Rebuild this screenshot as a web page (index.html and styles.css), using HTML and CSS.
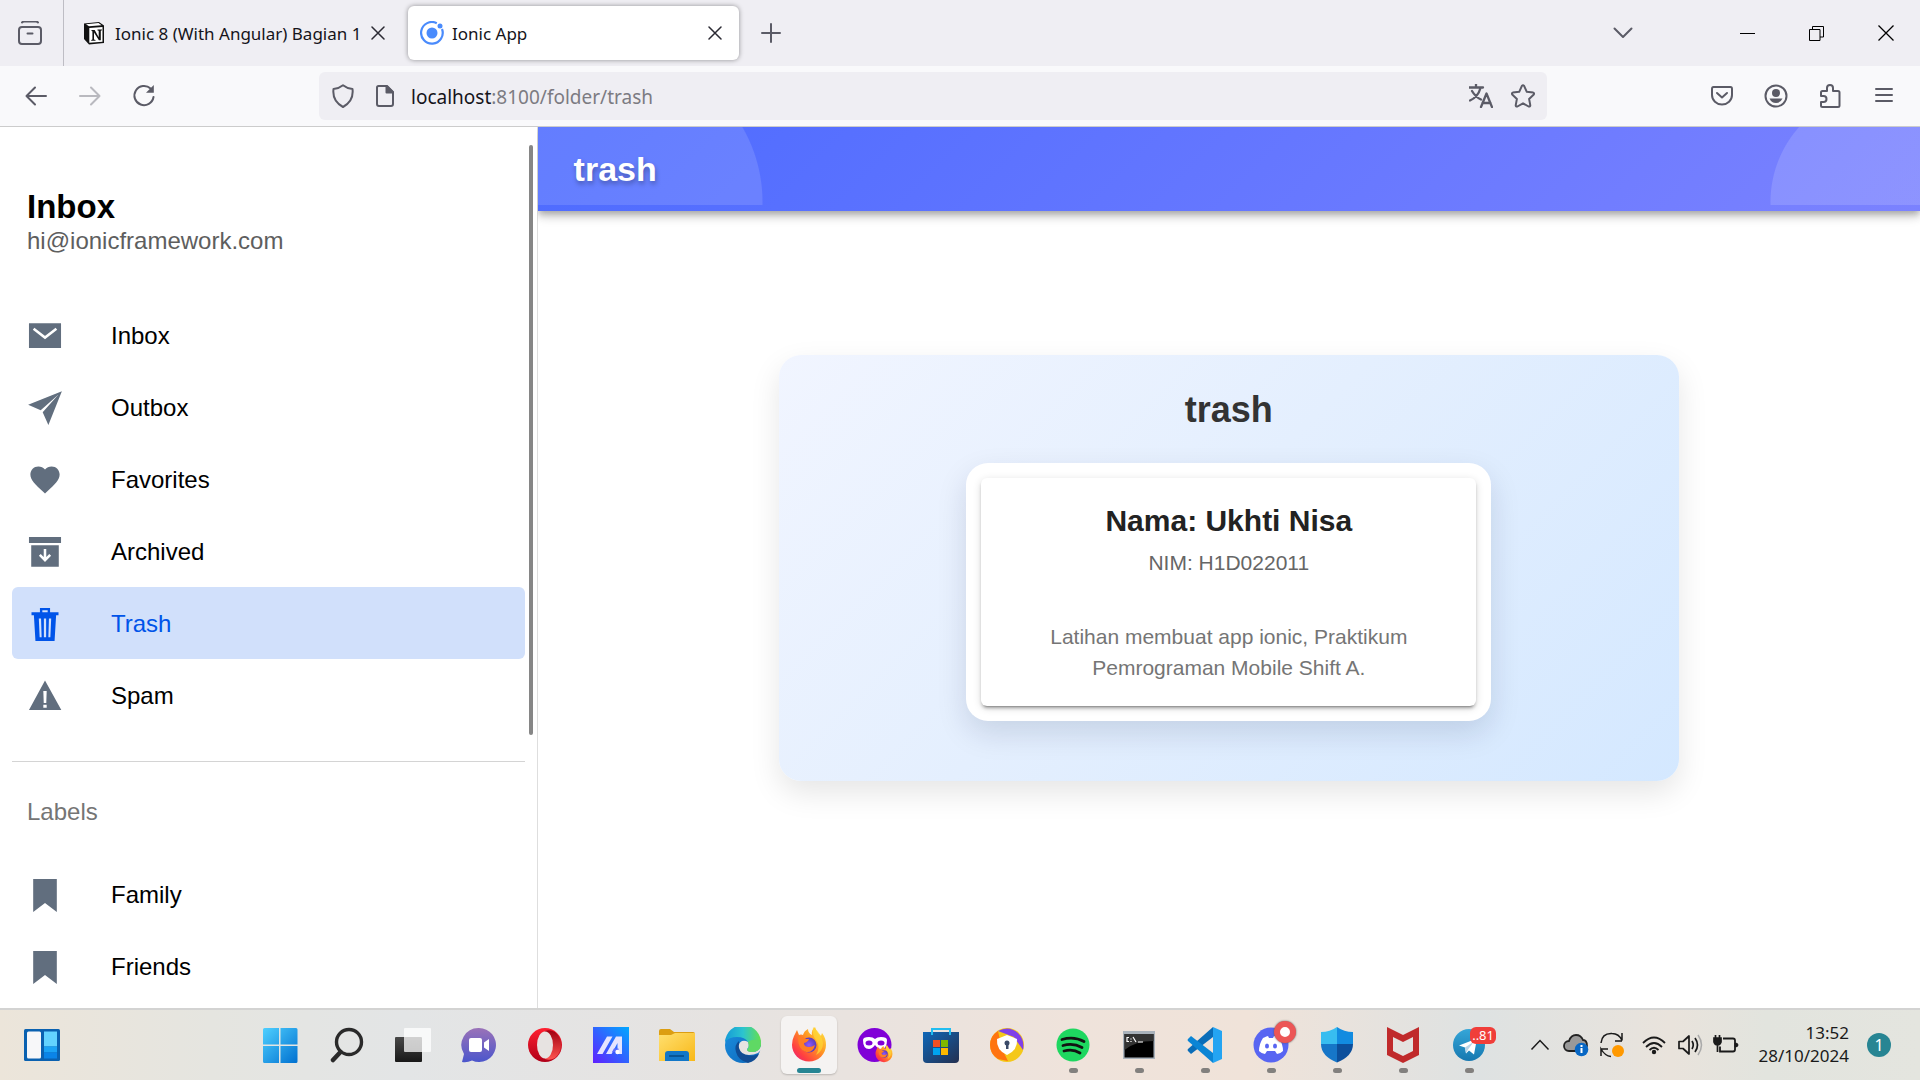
FILE: index.html
```html
<!DOCTYPE html>
<html lang="id">
<head>
<meta charset="utf-8">
<meta name="viewport" content="width=device-width, initial-scale=1">
<title>Ionic App</title>
<link rel="stylesheet" href="styles.css">
</head>
<body>
<header class="browser">
  <div class="tab-strip">
    <button class="recent" aria-label="Recent browsing">
      <svg class="line" width="24" height="24" viewBox="0 0 24 24"><path d="M4 1.500q.5-.9 2-.9h12q1.500 0 2 .9"/><rect x="1" y="6" width="22" height="17" rx="3"/><path d="M9.500 12.500h5"/></svg>
    </button>
    <div class="tab">
      <button class="tab-main">
        <svg width="24" height="24" viewBox="0 0 24 24"><path d="M1 2.500 16 1l5 3.500V22L6 23.500 1 18z" fill="#111"/><path d="M3 3.200 15.500 2l3 2.200L6 5.300z" fill="#fff"/><path d="M6.300 7 19.500 6v14.700L6.300 21.800z" fill="#fff"/><path d="M8.500 9h3.200l4 7.200V9.800l-1.200-.4V8.500H19v.8l-1.200.5v9.400h-1.900L11 11.500v7l1.500.5v.8H8.200V19l1.200-.5v-8.300L8.500 10z" fill="#111"/></svg>
        <span>Ionic 8 (With Angular) Bagian 1</span>
      </button>
      <button class="tab-close" aria-label="Close tab"><svg class="line dark" width="14" height="14" viewBox="0 0 14 14"><path d="m1 1 12 12M13 1 1 13"/></svg></button>
    </div>
    <div class="tab active">
      <button class="tab-main">
        <svg width="24" height="24" viewBox="0 0 24 24"><circle cx="12" cy="12" r="5.500" fill="#4a8bfc"/><circle cx="20" cy="5" r="2.500" fill="#4a8bfc"/><path d="M16.800 2.200A10.800 10.800 0 1 0 22 8" fill="none" stroke="#4a8bfc" stroke-width="2.200"/></svg>
        <span>Ionic App</span>
      </button>
      <button class="tab-close" aria-label="Close tab"><svg class="line dark" width="14" height="14" viewBox="0 0 14 14"><path d="m1 1 12 12M13 1 1 13"/></svg></button>
    </div>
    <button class="tool new-tab" aria-label="New tab"><svg class="line" width="20" height="20" viewBox="0 0 20 20"><path d="M10 1v18M1 10h18"/></svg></button>
    <div class="window-controls">
      <button class="tool all-tabs" aria-label="List all tabs"><svg class="line" width="20" height="12" viewBox="0 0 20 12"><path d="m1.500 1.500 8.500 8.500 8.500-8.500"/></svg></button>
      <button class="win" aria-label="Minimize"><svg width="15" height="15" viewBox="0 0 15 15"><path d="M0 7h15v1H0z"/></svg></button>
      <button class="win" aria-label="Restore"><svg width="15" height="15" viewBox="0 0 15 15"><path d="M.5 3.500h10.500v11H.5zM3.500 3.500v-3h11v10.500h-3.500" fill="none" stroke="#000"/></svg></button>
      <button class="win" aria-label="Close"><svg width="16" height="16" viewBox="0 0 16 16"><path d="m.5.5 15 15m0-15-15 15" stroke="#000" stroke-width="1.300"/></svg></button>
    </div>
  </div>
  <div class="toolbar">
    <button class="tool" aria-label="Back"><svg class="line" width="24" height="24" viewBox="0 0 24 24"><path d="M22 12H2.500M11 3.500 2.500 12l8.500 8.500"/></svg></button>
    <button class="tool dim" aria-label="Forward"><svg class="line" width="24" height="24" viewBox="0 0 24 24"><path d="M2 12h19.500M13 3.500l8.500 8.500-8.500 8.500"/></svg></button>
    <button class="tool" aria-label="Reload"><svg class="line" width="24" height="24" viewBox="0 0 24 24"><path d="M18.600 4.500A9.600 9.600 0 1 0 21.500 13"/><path d="M21.800 1v7.800H14z" fill="#5b5b66" stroke="none"/></svg></button>
    <form class="url-bar">
      <button type="button" aria-label="Tracking protection"><svg class="line" width="24" height="24" viewBox="0 0 24 24"><path d="M12 1.200q4.500 3.500 9.500 3.800Q23 17 12 23 1 17 2.500 5 7.500 4.700 12 1.200z"/></svg></button>
      <button type="button" aria-label="Site information"><svg class="line" width="24" height="24" viewBox="0 0 24 24"><path d="M5.500 2H14l6 6v12q0 2-2 2H6q-2 0-2-2V3.500Q4 2 5.500 2z"/><path d="M13.500 2v6.500H20z" fill="#5b5b66"/></svg></button>
      <label for="address">localhost</label><input id="address" type="text" value=":8100/folder/trash" spellcheck="false">
      <button type="button" aria-label="Translate"><svg class="line" width="24" height="24" viewBox="0 0 24 24"><path d="M0 3.500h14M7 0v3.500M11.500 4Q9 13 1 16.500M3 7q3.500 6 9 8.500M12 23l5.500-13.500L23 23M13.500 19h8" stroke-width="2.300"/></svg></button>
      <button type="button" aria-label="Bookmark this page"><svg class="line" width="24" height="24" viewBox="0 0 24 24"><path d="M10.900 1.800q1.100-1.300 2.200 0l2.700 6 6.400.8q1.500.5.600 1.900l-4.700 4.400 1.200 6.500q-.1 1.500-1.700 1.100L12 19.300l-5.600 3.200q-1.600.4-1.700-1.100l1.200-6.500-4.700-4.400q-.9-1.400.6-1.900l6.400-.8z"/></svg></button>
    </form>
    <button class="tool" aria-label="Save to Pocket"><svg class="line" width="24" height="24" viewBox="0 0 24 24"><path d="M3.500 3h17Q22 3 22 5v6a10 9.500 0 0 1-20 0V5q0-2 1.500-2z"/><path d="m7 9 5 4.500L17 9"/></svg></button>
    <button class="tool" aria-label="Account"><svg class="line" width="24" height="24" viewBox="0 0 24 24"><circle cx="12" cy="12" r="10.500"/><circle cx="12" cy="9" r="4" fill="#5b5b66" stroke="none"/><path d="M5.500 14.500h13q-2 4.500-6.500 4.500t-6.500-4.500z" fill="#5b5b66" stroke="none"/></svg></button>
    <button class="tool" aria-label="Extensions"><svg class="line" width="24" height="24" viewBox="0 0 24 24"><path d="M3 12V8.500Q3 7 4.500 7H9V4a3 3 0 0 1 6 0v3h5q1.500 0 1.500 1.500v13q0 1.500-1.500 1.500H4.500Q3 23 3 21.500V18h2.500a3 3 0 0 0 0-6z"/></svg></button>
    <button class="tool" aria-label="Menu"><svg class="line" width="20" height="24" viewBox="0 0 20 24"><path d="M2 5h16M2 11h16M2 17h16"/></svg></button>
  </div>
</header>

<div class="app">
  <aside class="menu">
    <div class="scroll-thumb"></div>
    <h1>Inbox</h1>
    <p class="note">hi@ionicframework.com</p>
    <nav class="menu-list">
      <a href="#inbox"><svg viewBox="0 0 512 512"><path d="M28 76h456v352H28z"/><path class="cut" d="m94 152 162 126 162-126"/></svg>Inbox</a>
      <a href="#outbox"><svg viewBox="0 0 512 512"><path d="m16 208 179 80L448 64 223 317l81 179L496 16z"/></svg>Outbox</a>
      <a href="#favorites"><svg viewBox="0 0 512 512"><path d="m256 448-30-27C119 322 48 259 48 179 48 114 98 64 162 64c37 0 71 17 94 44 23-27 57-44 94-44 64 0 114 50 114 115 0 80-71 143-178 242z"/></svg>Favorites</a>
      <a href="#archived"><svg viewBox="0 0 512 512"><path d="M28 44h456v84H28zM60 160h392v304H60z"/><path class="cut" d="M256 212v150M182 298l74 74 74-74"/></svg>Archived</a>
      <a href="#trash" class="selected"><svg viewBox="0 0 512 512"><path fill-rule="evenodd" d="M64 88h120V28h144v60h120v42h-34l-22 366H120L98 130H64zm154 0h76V62h-76zM168 176l12 270h28l-8-270zm72 0v270h32V176zm72 0-8 270h28l12-270z"/></svg>Trash</a>
      <a href="#spam"><svg viewBox="0 0 512 512"><path fill-rule="evenodd" d="M256 36 488 456H28zm-24 148 6 170h36l6-170zm0 198v42h48v-42z"/></svg>Spam</a>
    </nav>
    <h2>Labels</h2>
    <nav class="menu-list">
      <a href="#family"><svg viewBox="0 0 512 512"><path d="M88 28h336v468L256 368 88 496z"/></svg>Family</a>
      <a href="#friends"><svg viewBox="0 0 512 512"><path d="M88 28h336v468L256 368 88 496z"/></svg>Friends</a>
    </nav>
  </aside>
  <main>
    <header class="page-header"><div class="page-bar"><h2>trash</h2></div></header>
    <div class="page-content">
      <section class="panel">
        <h2>trash</h2>
        <div class="frame">
          <article class="card">
            <h3>Nama: Ukhti Nisa</h3>
            <p class="nim">NIM: H1D022011</p>
            <p class="about">Latihan membuat app ionic, Praktikum Pemrograman Mobile Shift A.</p>
          </article>
        </div>
      </section>
    </div>
  </main>
</div>

<footer class="taskbar">
  <svg width="0" height="0" class="defs"><defs>
    <linearGradient id="win" x1="0" y1="0" x2="1" y2="1"><stop stop-color="#4fd0ff"/><stop offset="1" stop-color="#0070d0"/></linearGradient>
    <linearGradient id="chat" x1="0" y1="0" x2="0" y2="1"><stop stop-color="#9a72b8"/><stop offset="1" stop-color="#4b56cc"/></linearGradient>
    <linearGradient id="opera" x1="0" y1="0" x2="0" y2="1"><stop stop-color="#ff2030"/><stop offset="1" stop-color="#b00018"/></linearGradient>
    <linearGradient id="operaIn" x1="0" y1="0" x2="0" y2="1"><stop stop-color="#a00010"/><stop offset="1" stop-color="#ff5550"/></linearGradient>
    <linearGradient id="asus" x1="0" y1="1" x2="1" y2="0"><stop stop-color="#6020ff"/><stop offset="1" stop-color="#00a8ff"/></linearGradient>
    <linearGradient id="folder" x1="0" y1="0" x2="1" y2="1"><stop stop-color="#ffe070"/><stop offset="1" stop-color="#f8b818"/></linearGradient>
    <linearGradient id="edgeTop" x1="0" y1="0" x2="1" y2="0"><stop stop-color="#159bd8"/><stop offset=".5" stop-color="#2cc4cf"/><stop offset="1" stop-color="#66e04c"/></linearGradient>
    <linearGradient id="edgeMid" x1="0" y1="0" x2="1" y2="1"><stop stop-color="#1b8fe0"/><stop offset="1" stop-color="#0c66b8"/></linearGradient>
    <linearGradient id="fox" x1="1" y1="0" x2="0" y2="1"><stop stop-color="#fff04a"/><stop offset=".4" stop-color="#ff9a22"/><stop offset=".75" stop-color="#ff4040"/><stop offset="1" stop-color="#e31587"/></linearGradient>
    <radialGradient id="globe"><stop stop-color="#9059ff"/><stop offset="1" stop-color="#5b3bb8"/></radialGradient>
    <linearGradient id="store" x1="0" y1="0" x2="1" y2="1"><stop stop-color="#0e67b8"/><stop offset="1" stop-color="#253050"/></linearGradient>
    <linearGradient id="tele" x1="0" y1="0" x2="0" y2="1"><stop stop-color="#35a6d8"/><stop offset="1" stop-color="#1678b0"/></linearGradient>
    <linearGradient id="tv" x1="0" y1="0" x2="0" y2="1"><stop stop-color="#484848"/><stop offset="1" stop-color="#181818"/></linearGradient>
    <symbol id="firefox" viewBox="0 0 36 36"><path d="M3 9l3-6 2 5q2-1 4 0 1-4 5-6 0 4 4 6-1-5 3-8 2 6 6 9l1-3q4 5 4 12a17 16.500 0 0 1-34 0Q1 13 3 9z" fill="url(#fox)"/><circle cx="18" cy="18" r="7.500" fill="url(#globe)"/><path d="M7 10q5-1 8 2h3q-1 3-5 4 0 4 5 4 3 0 6-2-2 8-9 7Q7 23 7 10z" fill="#ff7d24"/><path d="M22 0q9 7 10 16 0 8-7 12 5-8 0-15-4-4-3-13z" fill="#ffd836" opacity=".7"/></symbol>
  </defs></svg>
  <button class="widgets" aria-label="Widgets"><svg width="36" height="36" viewBox="0 0 36 36"><rect y="2" width="36" height="32" rx="1.500" fill="#0a61b0"/><rect x="3" y="4.500" width="14" height="27" rx="1.500" fill="#f7f7f9"/><path d="M20 4.500h13v15H20z" fill="#63d3ff"/><path d="M20 19.500h13v6H20z" fill="#1ba3f5"/><path d="M20 25.500h13v6H20z" fill="#0a84e8"/></svg></button>
  <div class="apps">
    <button aria-label="Start"><svg width="36" height="36" viewBox="0 0 36 36"><path d="M0 2.500Q0 1 1.500 1H16v16.500H0zM17.500 1H33q1.500 0 1.500 1.500v15h-17zM0 19h16v17H1.500Q0 36 0 34.500zM17.500 19h17v15.500q0 1.500-1.500 1.500H17.500z" fill="url(#win)"/></svg></button>
    <button aria-label="Search"><svg width="36" height="36" viewBox="0 0 36 36"><circle cx="20" cy="15" r="12.500" fill="none" stroke="#2a2a2a" stroke-width="3.400"/><path d="m11.500 25-7.500 8" stroke="#2a2a2a" stroke-width="4.500" stroke-linecap="round"/></svg></button>
    <button aria-label="Task view"><svg width="36" height="36" viewBox="0 0 36 36"><rect y="10" width="27" height="25" rx="1" fill="url(#tv)"/><rect x="9" y="1" width="27" height="24" rx="1" fill="#fff" opacity=".75"/></svg></button>
    <button aria-label="Chat"><svg width="36" height="36" viewBox="0 0 36 36"><path d="M18 1a17 17 0 1 1-7 32.500Q6 36 1 35l2-8A17 17 0 0 1 18 1z" fill="url(#chat)"/><rect x="8" y="11" width="13" height="14" rx="2" fill="#fff"/><path d="m23 15.500 5-3.500v12l-5-3.500z" fill="#fff"/></svg></button>
    <button aria-label="Opera"><svg width="36" height="36" viewBox="0 0 36 36"><circle cx="18" cy="18" r="17" fill="url(#opera)"/><path d="M18 4q5-2 10 1a17 17 0 0 1 0 26q-5 3-10 1z" fill="url(#operaIn)"/><ellipse cx="18" cy="18" rx="8" ry="13.500" fill="#e7e3e1"/></svg></button>
    <button aria-label="MyASUS"><svg width="36" height="36" viewBox="0 0 36 36"><path d="M0 0h36v36H0z" fill="url(#asus)"/><path d="M4 27 14 9.500h5.500L9.500 27zM13 27l10-17.500h6V27h-4.500V16l-6 11z" fill="#e4e4ff"/><path d="M21 21.500h4.500V25H19z" fill="#5a6cff"/><circle cx="24.500" cy="25" r="2.200" fill="#fff"/></svg></button>
    <button aria-label="File Explorer"><svg width="36" height="36" viewBox="0 0 36 36"><path d="M0 4q0-2 2-2h9l4 3h19q2 0 2 2v8H0z" fill="#dc9e12"/><path d="M0 8h12l4-2h20v28H0z" fill="url(#folder)"/><path d="M6 34v-7q0-3 3-3h18q3 0 3 3v7z" fill="#1277c8"/><path d="M10 29h15" stroke="#064a85" stroke-width="1.500"/></svg></button>
    <button aria-label="Edge"><svg width="36" height="36" viewBox="0 0 36 36"><circle cx="18" cy="18" r="18" fill="url(#edgeMid)"/><path d="M0 15A18 18 0 0 1 36 17q0 8-9 8-5 0-5-3 3-3 1-7-3-5-11-5-8 0-12 5z" fill="url(#edgeTop)"/><path d="M14 14q-5 4-3 11 2 8 12 11 8-2 11-9-6 3-12 1-9-4-8-14z" fill="#0f4c94"/><path d="M36 19q-2 6-9 6-5 0-5-3 3-3 1-7-3-2-6-1-4 2-3 7 2 7 10 7 5 0 9-2l3-3z" fill="#e6e3e1"/><path d="M36 14v3q-1 8-9 8-4 0-5-2 3-3 1-8 5-4 13-1z" fill="#5fd964"/></svg></button>
    <button class="current" aria-label="Firefox"><svg width="36" height="36"><use href="#firefox"/></svg></button>
    <button aria-label="Firefox Private Browsing"><svg width="36" height="36" viewBox="0 0 36 36"><circle cx="17.500" cy="18" r="17" fill="#8000d7"/><path d="M6 13q0-3 6-3 4 0 6 2 2-2 6-2 6 0 6 3 0 9-6 9-3 0-6-4-3 4-6 4-6 0-6-9z" fill="#fff"/><ellipse cx="12" cy="16" rx="3.500" ry="2.500" fill="#8000d7"/><ellipse cx="24" cy="16" rx="3.500" ry="2.500" fill="#8000d7"/><use href="#firefox" x="18" y="18" width="18" height="18"/></svg></button>
    <button aria-label="Microsoft Store"><svg width="36" height="36" viewBox="0 0 36 36"><path d="M0 5h36v27q0 4-4 4H4q-4 0-4-4z" fill="url(#store)"/><path d="M9 8V2h18v6" fill="none" stroke="#22bdf0" stroke-width="2"/><path d="M10 13h7v7h-7z" fill="#f25022"/><path d="M18 13h7v7h-7z" fill="#7fba00"/><path d="M10 21h7v7h-7z" fill="#00a4ef"/><path d="M18 21h7v7h-7z" fill="#ffb900"/></svg></button>
    <button aria-label="Secure Browser"><svg width="36" height="36" viewBox="0 0 36 36"><circle cx="18" cy="18" r="17" fill="#f4c81a"/><path d="M9 4Q20-2 29 6q7 7 5 17L25 10z" fill="#8040ea"/><path d="M9 4Q1 9 1 18t8 14l10 2-6-12z" fill="#ff7410"/><path d="m18 8 10 4q1 11-10 16Q7 23 8 12z" fill="#fff"/><circle cx="18" cy="16" r="2.500" fill="#3a4a68"/><path d="M17 17h2.500v5H17z" fill="#3a4a68"/></svg></button>
    <button class="running" aria-label="Spotify"><svg width="36" height="36" viewBox="0 0 36 36"><circle cx="18" cy="18" r="16.500" fill="#1ed760"/><path d="M7 12.500q12-3.500 22 2M8 18.500q10-3 19 2M9 24q9-2.500 16 2" fill="none" stroke="#121212" stroke-width="2.800" stroke-linecap="round"/></svg></button>
    <button class="running" aria-label="Command Prompt"><svg width="36" height="36" viewBox="0 0 36 36"><path d="M2 4h32v28H2z" fill="#a9b2bb"/><path d="M3.500 7h29v23.500h-29z" fill="#000"/><path d="M3.500 7h29v7Q14 14 3.500 23z" fill="#333"/><path d="M8 10.500H6v4h2M10 11.500v1M10 14v1M12 10l3 5M17 15h5" stroke="#fff" stroke-width="1.200" fill="none"/></svg></button>
    <button class="running" aria-label="Visual Studio Code"><svg width="36" height="36" viewBox="0 0 36 36"><path d="m26 0 9 4v28l-9 4z" fill="#24a4f2"/><path d="M26 0v10L4 27l-3-3q-1-1 0-2z" fill="#0a6db8"/><path d="M26 36V26L4 9l-3 3q-1 1 0 2z" fill="#0b85d5"/></svg></button>
    <button class="running" aria-label="Discord"><svg width="36" height="36" viewBox="0 0 36 36"><circle cx="18" cy="18" r="17.500" fill="#5865f2"/><path d="M10 11q4-2 5-2l1 2h4l1-2q2 0 5 2 4 6 4 13-3 3-6 3l-2-3h-8l-2 3q-3 0-6-3 0-7 4-13z" fill="#fff"/><ellipse cx="14" cy="19" rx="2" ry="2.500" fill="#5865f2"/><ellipse cx="22" cy="19" rx="2" ry="2.500" fill="#5865f2"/></svg><span class="record-badge"></span></button>
    <button class="running" aria-label="Windows Security"><svg width="36" height="36" viewBox="0 0 36 36"><path d="M18 0q7 5 16 5v12H18z" fill="#128be0"/><path d="M18 0Q11 5 2 5v12h16z" fill="#38bdf0"/><path d="M2 17h16v18.500Q2 29 2 17z" fill="#1676c8"/><path d="M34 17H18v18.500Q34 29 34 17z" fill="#0c4f9c"/></svg></button>
    <button class="running" aria-label="McAfee"><svg width="36" height="36" viewBox="0 0 36 36"><path fill-rule="evenodd" d="m2 0 16 8 16-8v28l-16 8-16-8zm6 10v14l10 5 10-5V10l-10 5z" fill="#c02a2b"/></svg></button>
    <button class="running" aria-label="Telegram"><svg width="36" height="36" viewBox="0 0 36 36"><circle cx="18" cy="18" r="16" fill="url(#tele)"/><path d="m8 18.500 18-7-3 16-5-4-3 3-1-6z" fill="#fff"/><path d="m14 20.500 9-6-6 8-2 4z" fill="#b8d4e8"/></svg><span class="count-badge">..81</span></button>
  </div>
  <div class="tray">
    <button aria-label="Show hidden icons"><svg width="20" height="12" viewBox="0 0 20 12"><path d="m1.500 10.500 8.500-9 8.500 9" fill="none" stroke="#1a1a1a" stroke-width="1.500"/></svg></button>
    <button aria-label="OneDrive"><svg width="26" height="24" viewBox="0 0 26 24"><path d="M6 18a5 5 0 0 1 0-10Q8 2 13 2q5 0 7 5 4 0 4 6l-6 5z" fill="#999" stroke="#222" stroke-width="1.800"/><circle cx="18.500" cy="16.500" r="6.800" fill="#0867c4"/><path d="M17.500 15h2v5h-2zM17.500 12h2v2h-2z" fill="#fff"/></svg></button>
    <button aria-label="Updates"><svg width="26" height="26" viewBox="0 0 26 26"><path d="M2 11Q3 1 13 1.500q7 0 10 7V1M23 9h-7M12 24.500Q6 24 2 17v7M2 17h7" fill="none" stroke="#1a1a1a" stroke-width="1.500"/><circle cx="19" cy="19" r="6" fill="#f90"/></svg></button>
    <button class="network" aria-label="Network"><svg width="26" height="20" viewBox="0 0 26 20"><path d="M2 8Q13-3 24 8M5 12q8-8 16 0M8.500 15q4.500-4.500 9 0" fill="none" stroke="#1a1a1a" stroke-width="1.800"/><circle cx="13" cy="17" r="2.200" fill="#1a1a1a"/></svg></button>
    <button aria-label="Volume"><svg width="26" height="22" viewBox="0 0 26 22"><path d="M2 7.500h4L12 2v18l-6-5.500H2zM15 7q2.500 4 0 8M18 4q5 7 0 14" fill="none" stroke="#1a1a1a" stroke-width="1.700" stroke-linejoin="round"/><path d="M21 1q7 10 0 20" fill="none" stroke="#aaa" stroke-width="1.500"/></svg></button>
    <button aria-label="Battery"><svg width="26" height="20" viewBox="0 0 26 20"><path d="M1 3h7v4q-1 3-3.500 3T1 7zM2.500 0v3M6.500 0v3M4.500 9v8" fill="#1a1a1a" stroke="#1a1a1a" stroke-width="1.700"/><path d="M10 3.500h10q2 0 2 2v9q0 2-2 2H7v-5" fill="none" stroke="#1a1a1a" stroke-width="1.800"/><path d="M22 8q3 0 3 2t-3 2z" fill="#1a1a1a" stroke="#1a1a1a"/></svg></button>
    <button class="clock"><time datetime="2024-10-28T13:52">13:52<br>28/10/2024</time></button>
    <button class="notifications" aria-label="Notifications">1</button>
  </div>
</footer>
</body>
</html>
```
FILE: styles.css
```css
* {
  box-sizing: border-box;
}

body {
  margin: 0;
  height: 100vh;
  display: flex;
  flex-direction: column;
  overflow: hidden;
  background: #fff;
  font-family: "Liberation Sans", Arial, sans-serif;
}

h1, h2, h3, p {
  margin: 0;
}

button {
  border: 0;
  padding: 0;
  background: none;
  color: inherit;
  font: inherit;
  display: flex;
  align-items: center;
  justify-content: center;
  flex-shrink: 0;
}

svg {
  display: block;
  flex-shrink: 0;
}

.line {
  fill: none;
  stroke: #5b5b66;
  stroke-width: 2;
  stroke-linecap: round;
  stroke-linejoin: round;
}

.line.dark {
  stroke: #2b2a33;
  stroke-width: 1.5;
}

/* Browser window */
.browser {
  flex-shrink: 0;
  font-family: "Noto Sans", sans-serif;
  color: #15141a;
  border-bottom: 1px solid #ccc;
}

.tab-strip {
  display: flex;
  align-items: center;
  height: 66px;
  background: #efeef3;
}

.recent {
  width: 64px;
  height: 66px;
  margin-right: 7px;
  padding-right: 3px;
  border-right: 1px solid #bebdc4;
}

.tab {
  display: flex;
  align-items: center;
  width: 331px;
  height: 54px;
  margin-right: 6px;
  padding: 0 12px;
  border-radius: 6px;
  font-size: 17px;
}

.tab.active {
  background: #fff;
  box-shadow: 0 0 5px rgba(0, 0, 0, 0.4);
}

.tab-main {
  flex: 1;
  min-width: 0;
  justify-content: flex-start;
  gap: 8px;
  white-space: nowrap;
}

.tab-close {
  width: 24px;
  height: 24px;
}

.tool {
  width: 48px;
  height: 48px;
  border-radius: 6px;
}

.new-tab {
  margin-left: 2px;
}

.dim {
  opacity: 0.4;
}

.window-controls {
  display: flex;
  align-items: center;
  margin-left: auto;
}

.all-tabs {
  margin-right: 66px;
}

.win {
  width: 69px;
  height: 66px;
}

.toolbar {
  display: flex;
  align-items: center;
  gap: 6px;
  height: 60px;
  padding: 0 12px;
  background: #f9f9fb;
}

.url-bar {
  display: flex;
  align-items: center;
  flex: 1;
  max-width: 1228px;
  height: 48px;
  margin: 0 auto;
  padding: 0 3px;
  border-radius: 6px;
  background: #efeef3;
  font-size: 19px;
}

.url-bar button {
  width: 42px;
  height: 42px;
}

.url-bar label {
  margin-left: 5px;
  padding-top: 2px;
}

.url-bar input {
  flex: 1;
  min-width: 0;
  border: 0;
  padding: 2px 0 0;
  outline: 0;
  background: none;
  font: inherit;
  color: #7c7b82;
}

/* Ionic split pane */
.app {
  flex: 1;
  min-height: 0;
  display: flex;
}

.menu {
  position: relative;
  flex: 0 0 28%;
  padding: 60px 12px 0;
  border-right: 1px solid #dedede;
  overflow: hidden;
}

.scroll-thumb {
  position: absolute;
  top: 18px;
  right: 4px;
  width: 4px;
  height: 67%;
  border-radius: 2px;
  background: #868686;
}

.menu h1 {
  padding-left: 15px;
  font-size: 33px;
  line-height: 40px;
}

.note {
  padding-left: 15px;
  margin-bottom: 44px;
  font-size: 24px;
  line-height: 28px;
  color: #5e5e5e;
}

.menu h2 {
  margin-top: 30px;
  padding: 36px 15px 32px;
  border-top: 1px solid #d4d4d4;
  font-size: 24px;
  font-weight: 400;
  line-height: 28px;
  color: #757575;
}

.menu-list a {
  display: flex;
  align-items: center;
  gap: 48px;
  height: 72px;
  padding: 1px 15px 0;
  border-radius: 6px;
  font-size: 24px;
  color: #000;
  text-decoration: none;
}

.menu-list svg {
  width: 36px;
  height: 36px;
  fill: #616e7e;
}

.menu-list .cut {
  fill: none;
  stroke: #fff;
  stroke-width: 36;
}

.menu-list .selected {
  background: #d1e0fb;
  color: #0054e9;
}

.menu-list .selected svg {
  fill: #0054e9;
}

/* Page */
main {
  flex: 1;
  min-width: 0;
  display: flex;
  flex-direction: column;
}

.page-header {
  flex-shrink: 0;
  padding-bottom: 6px;
  background: linear-gradient(135deg, #4d6bff, #7b82ff);
  box-shadow: 0 3px 6px -1px rgba(0, 0, 0, 0.2), 0 6px 8px rgba(0, 0, 0, 0.14), 0 2px 15px rgba(0, 0, 0, 0.12);
  clip-path: inset(0 0 -30px 0);
}

.page-bar {
  display: flex;
  align-items: center;
  height: 78px;
  padding: 6px 36px 0;
  background:
    radial-gradient(circle at 75px 75px, rgba(255, 255, 255, 0.12) 149px, transparent 150px),
    radial-gradient(circle at calc(100% - 37px) 75px, rgba(255, 255, 255, 0.14) 112px, transparent 113px);
}

.page-bar h2 {
  font-size: 34px;
  line-height: 40px;
  color: #fff;
  text-shadow: 1px 3px 5px rgba(0, 0, 0, 0.3);
}

.page-content {
  flex: 1;
  display: flex;
  align-items: center;
  justify-content: center;
  padding-bottom: 84px;
}

.panel {
  display: flex;
  flex-direction: column;
  align-items: center;
  width: 900px;
  padding: 31px 30px 60px;
  border-radius: 22px;
  background: linear-gradient(135deg, #f1f5ff, #e4effe 45%, #d4e8ff);
  box-shadow: 0 12px 30px rgba(0, 0, 0, 0.1);
}

.panel h2 {
  margin-bottom: 29px;
  font-size: 36px;
  line-height: 48px;
  color: #333;
}

.frame {
  width: 525px;
  padding: 15px;
  border-radius: 22px;
  background: #fff;
  box-shadow: 0 12px 30px rgba(0, 20, 60, 0.13);
}

.card {
  padding: 25px 30px 23px;
  border-radius: 6px;
  text-align: center;
  box-shadow: 0 4px 2px -3px rgba(0, 0, 0, 0.3), 0 3px 3px rgba(0, 0, 0, 0.16), 0 2px 8px rgba(0, 0, 0, 0.14);
}

.card h3 {
  font-size: 30px;
  line-height: 36px;
  color: #222;
}

.nim {
  margin: 10px 0 44px;
  font-size: 21px;
  line-height: 28px;
  color: #666;
}

.about {
  font-size: 21px;
  line-height: 31px;
  color: #757575;
}

/* Windows taskbar */
.taskbar {
  position: relative;
  flex-shrink: 0;
  display: flex;
  align-items: center;
  height: 72px;
  padding-left: 24px;
  border-top: 2px solid #d3d3d2;
  background: linear-gradient(90deg, #ece5da, #e5e5e0 11%, #e3e5e6 21%, #e6e3e1 38%, #efe3db 56%, #f0e3d9 65%, #dee2e2 77%, #e9e3dc 87%, #e2e4de 92%, #e4e5df);
}

.defs {
  position: absolute;
}

.apps {
  display: flex;
  margin-left: 188px;
}

.apps button {
  position: relative;
  width: 56px;
  height: 58px;
  margin: 0 5px;
  border-radius: 6px;
}

.apps .current {
  background: #f5f3f2;
  box-shadow: 0 1px 2px rgba(0, 0, 0, 0.2);
}

.apps .current::after,
.apps .running::after {
  content: "";
  position: absolute;
  bottom: 1px;
  left: 50%;
  width: 9px;
  height: 5px;
  margin-left: -4px;
  border-radius: 3px;
  background: #82807e;
}

.apps .current::after {
  width: 24px;
  margin-left: -12px;
  background: #278593;
}

.record-badge {
  position: absolute;
  top: 5px;
  right: 3px;
  width: 22px;
  height: 22px;
  border: 6px solid #ec5656;
  border-radius: 50%;
  background: #fff;
  box-shadow: 0 0 2px #555;
}

.count-badge {
  position: absolute;
  top: 11px;
  right: 1px;
  padding: 0 2px;
  border-radius: 6px;
  background: #f03e3a;
  font: 13px/17px "Noto Sans", sans-serif;
  color: #fff;
}

.tray {
  display: flex;
  align-items: center;
  margin-left: auto;
  padding-right: 29px;
  font-family: "Noto Sans", sans-serif;
  color: #1a1a1a;
}

.tray button {
  width: 36px;
}

.tray .network {
  margin-left: 6px;
}

.tray .clock {
  width: auto;
  margin: 0 18px 2px 15px;
  font-size: 17px;
  line-height: 23px;
  text-align: right;
}

.tray .notifications {
  width: 24px;
  height: 24px;
  border-radius: 50%;
  background: #278593;
  color: #fff;
  font-size: 16px;
}
```
